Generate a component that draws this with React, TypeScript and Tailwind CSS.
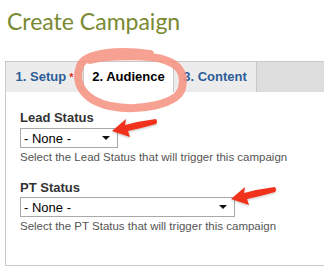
import React from "react";

function Select({ width }: { width: number }) {
  return (
    <div
      className="flex items-center justify-between h-[20px] border border-[#a9a9a9] bg-white pl-[3px] pr-[7px] text-[13px] text-black leading-none"
      style={{ width }}
    >
      <span>- None -</span>
      <svg width="8" height="4" viewBox="0 0 8 4">
        <path d="M0 0 L8 0 L4 4 Z" fill="#111" />
      </svg>
    </div>
  );
}

function Arrow({ x, y }: { x: number; y: number }) {
  return (
    <svg
      className="absolute"
      style={{ left: x, top: y }}
      width="50"
      height="26"
      viewBox="0 0 50 26"
    >
      <defs>
        <filter id="sh" x="-20%" y="-40%" width="140%" height="180%">
          <feDropShadow dx="0" dy="1" stdDeviation="1" floodColor="#000" floodOpacity="0.25" />
        </filter>
      </defs>
      <path
        d="M2 15 L16 3 L15 9 Q30 5 46 3 Q48 6 46 8 Q32 12 18 15 L20 21 Z"
        fill="#f0331c"
        filter="url(#sh)"
      />
    </svg>
  );
}

export default function App() {
  return (
    <div
      className="relative w-[324px] h-[274px] bg-white overflow-hidden"
      style={{ fontFamily: '"Liberation Sans", Arial, sans-serif' }}
    >
      <h1
        className="pl-[7px] pt-[6px] h-[61px] text-[23px] leading-[30px] text-[#7a8a32]"
        style={{ fontFamily: 'Lato, sans-serif' }}
      >
        Create Campaign
      </h1>
      <div className="ml-[5px] flex h-[31px] border-t border-l border-[#c8c8c8] bg-[#dddddd] text-[13px] font-bold">
        <div className="w-[78px] flex items-center justify-center border-r border-[#c8c8c8] bg-[#ececec] text-[#2c5d98]">
          1. Setup<span className="text-[#e0302a] ml-[3px] text-[11px]">*</span>
        </div>
        <div className="w-[90px] flex items-center justify-center border-r border-[#c8c8c8] bg-white text-black">
          2. Audience
        </div>
        <div className="w-[83px] flex items-center justify-center border-r border-[#c8c8c8] bg-[#ececec] text-[#2c5d98]">
          3. Content
        </div>
      </div>
      <div className="ml-[5px] h-[174px] border-l border-b border-[#c8c8c8] bg-white pl-[14px] pt-[18px]">
        <div className="text-[13px] font-bold text-[#333] leading-[16px]">Lead Status</div>
        <div className="mt-[2px]">
          <Select width={98} />
        </div>
        <div className="mt-[2px] text-[11.5px] text-[#555] leading-[14px]">
          Select the Lead Status that will trigger this campaign
        </div>
        <div className="mt-[16px] text-[13px] font-bold text-[#333] leading-[16px]">PT Status</div>
        <div className="mt-[1px]">
          <Select width={215} />
        </div>
        <div className="mt-[2px] text-[11.5px] text-[#555] leading-[14px]">
          Select the PT Status that will trigger this campaign
        </div>
      </div>
      <svg className="absolute left-0 top-0" width="324" height="274" viewBox="0 0 324 274">
        <path
          d="M150 54 C120 50 85 52 80 66 C74 82 82 100 110 106 C140 112 178 104 182 88 C186 72 178 60 150 57 C130 55 100 57 90 60"
          fill="none"
          stroke="#f6917f"
          strokeOpacity="0.85"
          strokeWidth="8"
          strokeLinecap="round"
        />
      </svg>
      <Arrow x={110} y={116} />
      <Arrow x={229} y={184} />
    </div>
  );
}
